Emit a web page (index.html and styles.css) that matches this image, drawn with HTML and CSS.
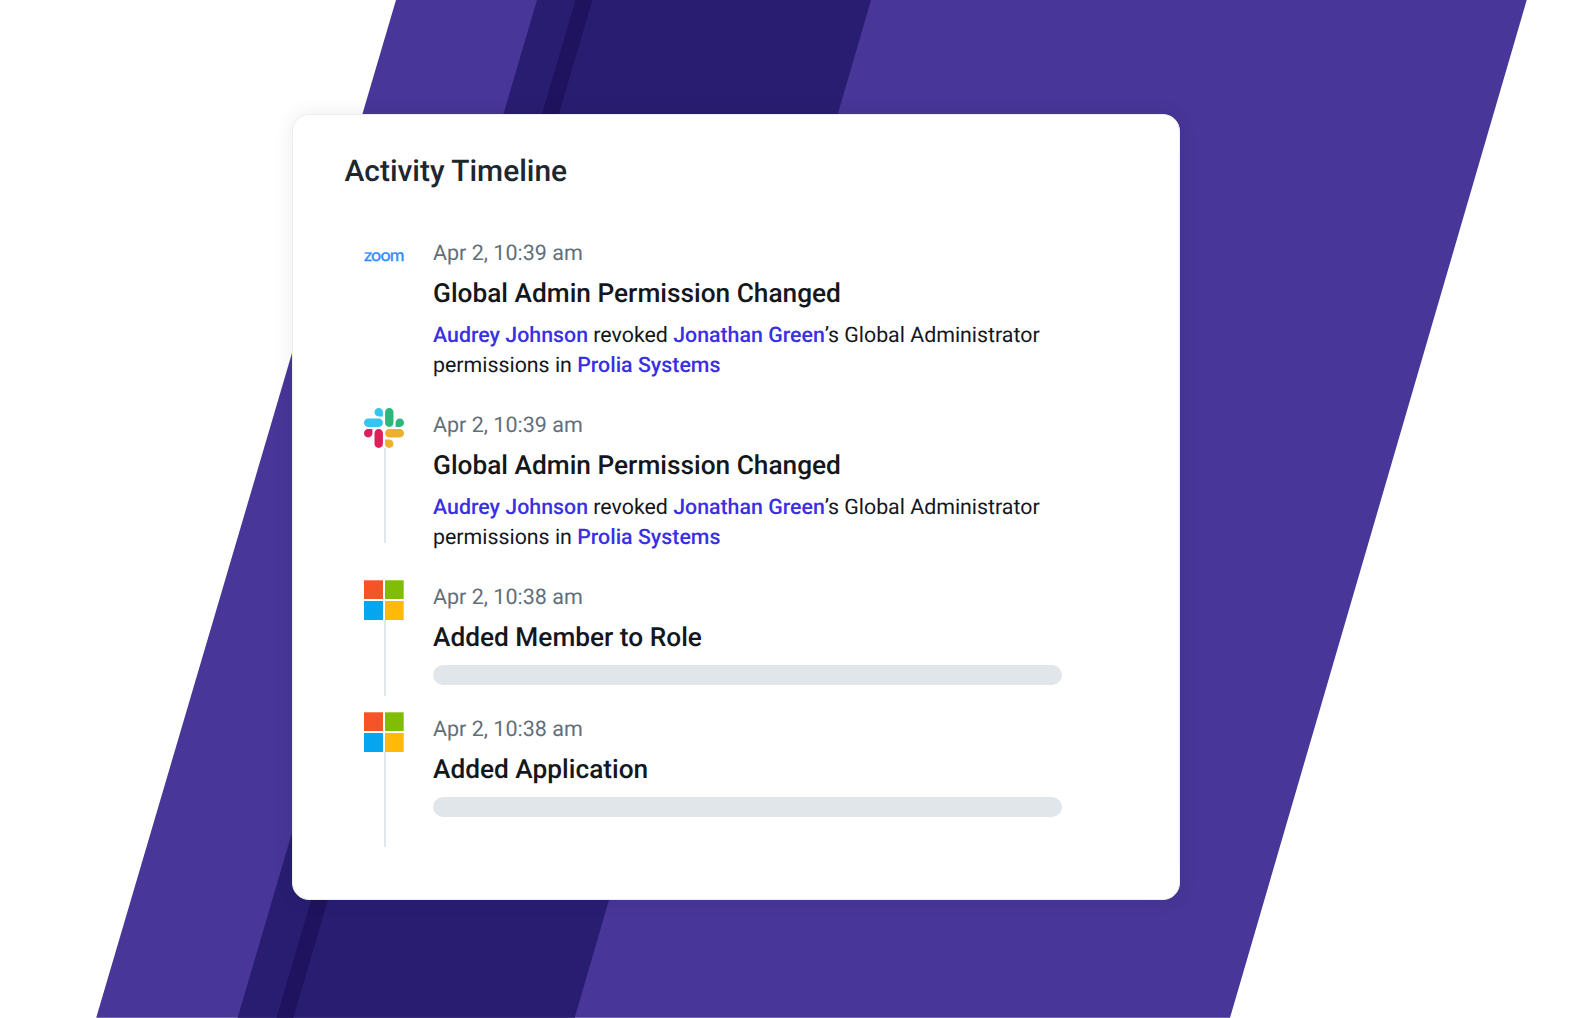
FILE: index.html
```html
<!DOCTYPE html>
<html lang="en">
<head>
<meta charset="utf-8">
<title>Activity Timeline</title>
<link rel="stylesheet" href="styles.css">
</head>
<body>
<svg width="0" height="0" class="sprite" aria-hidden="true">
  <symbol id="slack" viewBox="0 0 122.8 122.8">
    <path fill="#E01E5A" d="M25.8 77.6c0 7.1-5.8 12.9-12.9 12.9S0 84.7 0 77.6s5.8-12.9 12.9-12.9h12.9v12.9zm6.5 0c0-7.1 5.8-12.9 12.9-12.9s12.9 5.8 12.9 12.9v32.3c0 7.1-5.8 12.9-12.9 12.9s-12.9-5.8-12.9-12.9V77.6z"/>
    <path fill="#36C5F0" d="M45.2 25.8c-7.1 0-12.9-5.8-12.9-12.9S38.1 0 45.2 0s12.9 5.8 12.9 12.9v12.9H45.2zm0 6.5c7.1 0 12.9 5.8 12.9 12.9s-5.8 12.9-12.9 12.9H12.9C5.8 58.1 0 52.3 0 45.2s5.8-12.9 12.9-12.9h32.3z"/>
    <path fill="#2EB67D" d="M97 45.2c0-7.1 5.8-12.9 12.9-12.9s12.9 5.8 12.9 12.9-5.8 12.9-12.9 12.9H97V45.2zm-6.5 0c0 7.1-5.8 12.9-12.9 12.9s-12.9-5.8-12.9-12.9V12.9C64.7 5.8 70.5 0 77.6 0s12.9 5.8 12.9 12.9v32.3z"/>
    <path fill="#ECB22E" d="M77.6 97c7.1 0 12.9 5.8 12.9 12.9s-5.8 12.9-12.9 12.9-12.9-5.8-12.9-12.9V97h12.9zm0-6.5c-7.1 0-12.9-5.8-12.9-12.9s5.8-12.9 12.9-12.9h32.3c7.1 0 12.9 5.8 12.9 12.9s-5.8 12.9-12.9 12.9H77.6z"/>
  </symbol>
  <symbol id="microsoft" viewBox="0 0 40 40">
    <path fill="#F65326" d="M0 .3h19v18.7H0z"/>
    <path fill="#81BC06" d="M21 .3h18.7v18.7H21z"/>
    <path fill="#04A6F0" d="M0 21h19v19H0z"/>
    <path fill="#FFBA08" d="M21 21h18.7v19H21z"/>
  </symbol>
</svg>
<main class="stage">
  <svg class="backdrop" viewBox="0 0 1594 1018" aria-hidden="true">
    <path fill="#483698" d="M396 0H1526.7L1230 1017.7H96.2z"/>
    <path fill="#291D72" d="M537 0H871L574.7 1017.7H237.6z"/>
    <path fill="#1F135F" d="M575.5 0H592.4L293.3 1017.7H276.5z"/>
  </svg>
  <section class="card">
    <h1 class="card-title">Activity Timeline</h1>
    <ol class="timeline">
      <li class="event">
        <div class="rail"><span class="zoom-logo">zoom</span></div>
        <div class="detail">
          <time class="date">Apr 2, 10:39 am</time>
          <h2 class="event-title">Global Admin Permission Changed</h2>
          <p class="text"><b>Audrey Johnson</b> revoked <b>Jonathan Green</b>’s Global Administrator<br>permissions in <b>Prolia Systems</b></p>
        </div>
      </li>
      <li class="event">
        <div class="rail"><svg class="icon"><use href="#slack"/></svg><span class="line long"></span></div>
        <div class="detail">
          <time class="date">Apr 2, 10:39 am</time>
          <h2 class="event-title">Global Admin Permission Changed</h2>
          <p class="text"><b>Audrey Johnson</b> revoked <b>Jonathan Green</b>’s Global Administrator<br>permissions in <b>Prolia Systems</b></p>
        </div>
      </li>
      <li class="event compact">
        <div class="rail"><svg class="icon"><use href="#microsoft"/></svg><span class="line"></span></div>
        <div class="detail">
          <time class="date">Apr 2, 10:38 am</time>
          <h2 class="event-title">Added Member to Role</h2>
          <div class="placeholder"></div>
        </div>
      </li>
      <li class="event compact">
        <div class="rail"><svg class="icon"><use href="#microsoft"/></svg><span class="line long"></span></div>
        <div class="detail">
          <time class="date">Apr 2, 10:38 am</time>
          <h2 class="event-title">Added Application</h2>
          <div class="placeholder"></div>
        </div>
      </li>
    </ol>
  </section>
</main>
</body>
</html>
```
FILE: styles.css
```css
* { box-sizing: border-box; }

body {
  margin: 0;
  background: #fff;
  font-family: Roboto, "Liberation Sans", sans-serif;
  color: #14171c;
  text-rendering: geometricPrecision;
}

.sprite { display: block; }

.stage {
  display: grid;
  width: 1594px;
  height: 1018px;
  overflow: hidden;
}

.backdrop {
  grid-area: 1 / 1;
  width: 1594px;
  height: 1018px;
}

.card {
  grid-area: 1 / 1;
  z-index: 1;
  width: 888px;
  height: 786px;
  margin: 114px 0 0 292px;
  padding: 39px 51px 0;
  border: 1px solid #ebeef1;
  border-radius: 17px;
  background: #fff;
  box-shadow: 0 0 20px rgba(0, 0, 0, 0.08);
}

.card-title {
  margin: 0 0 46px;
  padding-left: 0.5px;
  font-size: 29.9px;
  line-height: 36px;
  font-weight: 500;
  color: #1e2630;
}

.timeline {
  margin: 0;
  padding: 0 0 0 20px;
  list-style: none;
}

.event {
  display: flex;
  gap: 29px;
  height: 172px;
}

.event.compact { height: 132px; }

.rail {
  display: flex;
  flex-direction: column;
  align-items: center;
  width: 40px;
}

.icon {
  display: block;
  flex: none;
  width: 40px;
  height: 40px;
}

.line {
  flex: none;
  width: 2px;
  height: 76px;
  margin-left: 2px;
  background: #e1e6ea;
}

.line.long { height: 95px; }

.zoom-logo {
  font-family: Lato, sans-serif;
  font-size: 17px;
  line-height: 38px;
  letter-spacing: -0.8px;
  color: #2d8cff;
  -webkit-text-stroke: 0.35px #2d8cff;
  transform: scaleX(1.05);
}

.detail { padding-top: 2.5px; }

.date {
  display: block;
  font-size: 21.5px;
  line-height: 30px;
  color: #626f7a;
}

.event-title {
  margin: 10.5px 0 12px;
  font-size: 26.25px;
  line-height: 30px;
  font-weight: 500;
}

.text {
  margin: 0;
  font-size: 21.35px;
  line-height: 30px;
  white-space: nowrap;
}

.text b {
  font-weight: 500;
  color: #3930e4;
}

.placeholder {
  width: 629px;
  height: 20px;
  margin-top: -1px;
  border-radius: 10px;
  background: #e1e6ea;
}

.compact .event-title { margin-bottom: 13px; }
```
